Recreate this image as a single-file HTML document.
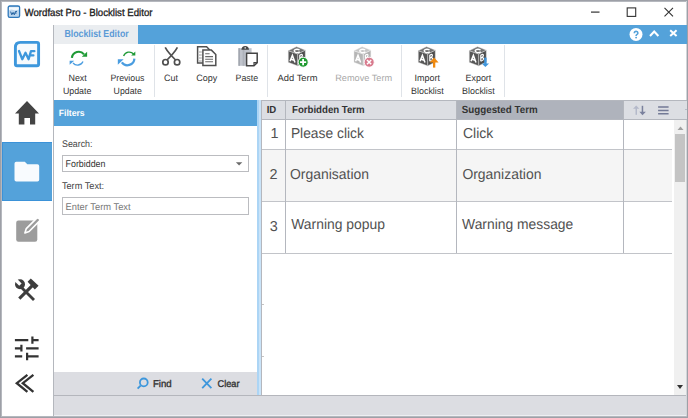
<!DOCTYPE html>
<html><head><meta charset="utf-8">
<style>
*{margin:0;padding:0;box-sizing:border-box}
html,body{width:688px;height:418px;overflow:hidden;background:#fff;font-family:"Liberation Sans",sans-serif}
svg{position:absolute;left:0;top:0}
text{font-family:"Liberation Sans",sans-serif;text-rendering:geometricPrecision}
</style></head><body>
<svg width="688" height="418" viewBox="0 0 688 418">
<!-- window frame -->
<rect x="0" y="0" width="688" height="418" fill="#fff"/>
<g shape-rendering="crispEdges">
<rect x="0" y="0" width="688" height="2" fill="#b5b8be"/>
<rect x="0" y="0" width="2" height="418" fill="#b5b8be"/>
<rect x="686" y="0" width="1" height="418" fill="#d3d5d9"/>
<rect x="0" y="416" width="688" height="2" fill="#b5b8be"/>
<rect x="0" y="0" width="688" height="1" fill="#9da0a7"/>
<rect x="0" y="0" width="1" height="418" fill="#9da0a7"/>
<rect x="687" y="0" width="1" height="418" fill="#9da0a7"/>
<rect x="0" y="417" width="688" height="1" fill="#9da0a7"/>
<!-- sidebar divider -->
<rect x="53" y="25" width="1" height="392" fill="#b4b7bd"/>
<!-- selected sidebar item -->
<rect x="2" y="142" width="50" height="59" fill="#54a2da"/>
<rect x="2" y="142" width="50" height="1" fill="#3b92d8"/>
<rect x="2" y="142" width="1" height="59" fill="#3b92d8"/>
<rect x="2" y="200" width="50" height="1" fill="#3b92d8"/>
<!-- tab bar -->
<rect x="54" y="25" width="633" height="19" fill="#54a2da"/>
<rect x="54" y="25" width="84" height="19" fill="#eaedf0"/>
<!-- ribbon separators -->
<rect x="154" y="45" width="1" height="52" fill="#dfe3e8"/>
<rect x="267" y="45" width="1" height="52" fill="#dfe3e8"/>
<rect x="401" y="45" width="1" height="52" fill="#dfe3e8"/>
<rect x="504" y="45" width="1" height="52" fill="#dfe3e8"/>

<!-- filters panel -->
<rect x="54" y="100" width="203" height="26" fill="#54a2da"/>
<rect x="62" y="155" width="186" height="16" fill="#fff" stroke="#bbbcc0" stroke-width="1.1" transform="translate(0.5 0.5)"/>
<rect x="62" y="197" width="186" height="17" fill="#fff" stroke="#bbbcc0" stroke-width="1.1" transform="translate(0.5 0.5)"/>
<rect x="54" y="372" width="203" height="23" fill="#dcdde2"/>
<!-- splitter -->
<rect x="257" y="100" width="2" height="295" fill="#acd5f5"/>
<rect x="259" y="100" width="2" height="295" fill="#c9e3f8"/>
<!-- status bar -->
<rect x="54" y="395" width="632" height="1" fill="#b4b6bc"/>
<rect x="54" y="396" width="632" height="20" fill="#dcdde2"/>
<rect x="54" y="415" width="632" height="1" fill="#eeeff2"/>
<!-- grid -->
<rect x="261" y="100" width="426" height="20" fill="#dcdee3"/>
<rect x="457" y="101" width="166" height="18" fill="#afb3bc"/>
<rect x="261" y="100" width="426" height="1" fill="#b4b7be"/>
<rect x="261" y="119" width="426" height="1" fill="#b4b7be"/>
<rect x="262" y="150" width="410" height="51" fill="#f5f5f5"/>
<rect x="261" y="149" width="411" height="1" fill="#c2c4c9"/>
<rect x="261" y="201" width="411" height="1" fill="#c2c4c9"/>
<rect x="261" y="253" width="411" height="1" fill="#c2c4c9"/>
<rect x="261" y="100" width="1" height="295" fill="#b4b7be"/>
<rect x="285" y="100" width="1" height="153" fill="#b4b7be"/>
<rect x="456" y="100" width="1" height="153" fill="#b4b7be"/>
<rect x="623" y="100" width="1" height="153" fill="#b4b7be"/>

<rect x="262" y="304" width="2" height="1" fill="#c4c4c4"/>
<rect x="262" y="356" width="2" height="1" fill="#c4c4c4"/>
<rect x="685" y="109" width="2" height="1" fill="#b8bcc8"/>
<!-- scrollbar -->
<rect x="674" y="120" width="12" height="275" fill="#f0f0f0"/>
<rect x="675" y="134" width="10" height="48" fill="#c4c4c4"/>
</g>
<!-- scroll arrows -->
<path d="M677.5,130 L680.5,126.5 L683.5,130 Z" fill="#a0a0a0"/>
<path d="M677,385 L683,385 L680,389 Z" fill="#333"/>
<!-- dropdown arrow -->
<path d="M235.9,162.2 L242.3,162.2 L239.1,165.6 Z" fill="#6a6a6a"/>


<!-- ================= ICONS ================= -->
<!-- title app icon -->
<rect x="8.2" y="6" width="11.4" height="11.4" rx="1.6" fill="#bcd6ee" stroke="#2e78ba" stroke-width="1.3"/>
<path d="M9,7.2 L18.8,7.2 L18.8,9.6 Q16,11 13.5,10 Q11,9 9,10.4 Z" fill="#f4f9fd"/>
<path d="M10.6,11.6 L11.8,14.8 L13.1,12.4 L14.3,14.8 L15.5,11.4 L17,11.4 M15,13 L16.6,13" fill="none" stroke="#1f5f9e" stroke-width="1"/>
<!-- window controls -->
<rect x="591" y="11.5" width="8.5" height="1.2" fill="#333"/>
<rect x="627.2" y="7.9" width="8.5" height="8.5" fill="none" stroke="#333" stroke-width="1.1"/>
<path d="M664.5,7.8 L673,16.3 M673,7.8 L664.5,16.3" stroke="#333" stroke-width="1.1"/>
<!-- tab bar right icons -->
<circle cx="636" cy="34.4" r="6.5" fill="#fff"/>
<path d="M634.3,33.2 Q634.4,31.3 636.1,31.3 Q637.9,31.4 637.9,33 Q637.9,34 636.8,34.6 Q636.1,35 636.1,35.9" fill="none" stroke="#54a2da" stroke-width="1.6"/>
<circle cx="636.1" cy="37.6" r="0.95" fill="#54a2da"/>
<path d="M650,36 L654.2,31.5 L658.4,36" fill="none" stroke="#fff" stroke-width="2"/>
<path d="M670.2,30.2 L676.6,36 M676.6,30.2 L670.2,36" stroke="#fff" stroke-width="2"/>

<!-- sidebar WF logo -->
<path d="M15.4,47.4 Q15.4,42.4 20.4,42.4 L37,42.4 Q38.6,42.4 38.6,44 L38.6,64.2 Q38.6,65.8 37,65.8 L17,65.8 Q15.4,65.8 15.4,64.2 Z" fill="#f6fafd" stroke="#3d97dc" stroke-width="2.9"/>
<path d="M19,51 L22.3,59.2 L25.5,52.8 L28.6,59.2 L31,51.2 L34.4,51.2 M29.8,55.4 L33.4,55.4" fill="none" stroke="#3d97dc" stroke-width="2.3" stroke-linejoin="round" stroke-linecap="round"/>
<!-- home -->
<path d="M27,101 L39,113.4 L35.2,113.4 L35.2,124.6 L30,124.6 L30,118.1 L24.4,118.1 L24.4,124.6 L18.8,124.6 L18.8,113.4 L15,113.4 Z" fill="#444"/>
<!-- folder -->
<path d="M16.3,161.8 L24.8,161.8 L27.3,164.3 L37.4,164.3 Q39.2,164.3 39.2,166.1 L39.2,179.8 Q39.2,181.6 37.4,181.6 L16.3,181.6 Q14.5,181.6 14.5,179.8 L14.5,163.6 Q14.5,161.8 16.3,161.8 Z" fill="#f8fbfe"/>
<!-- edit -->
<rect x="16.2" y="220.6" width="21.1" height="21.1" rx="2.2" fill="#9c9c9c"/>
<path d="M24.9,233 L26.3,228.6 L36.3,218.6 Q37.7,217.2 39.1,218.6 Q40.5,220 39.1,221.4 L29.1,231.5 Z" fill="#9c9c9c" stroke="#fff" stroke-width="1.6" stroke-linejoin="round"/>
<!-- tools -->
<g fill="#3d3d3d">
<path d="M18.2,297.6 L31.2,284.6 L33.4,286.8 L20.4,299.8 Z"/>
<path d="M30.8,278.4 L38.6,285.8 L34.8,289.4 L27.6,281.8 Z"/>
<path d="M22,286 L35,299 L33,301 L20,288 Z"/>
<circle cx="20" cy="284.2" r="5"/>
<path d="M21.6,283.4 L19.2,285.8 L13.6,280.2 L16,277.8 Z" fill="#fff"/>
</g>
<!-- sliders -->
<g stroke="#333" stroke-width="2.2" fill="none">
<path d="M14.9,340.2 L28.3,340.2 M32.4,340.2 L38.6,340.2 M32.4,336.5 L32.4,343.8"/>
<path d="M14.9,348.3 L21.4,348.3 M26.1,348.3 L38.6,348.3 M21.4,344.8 L21.4,351.6"/>
<path d="M14.9,356.3 L22.2,356.3 M27.1,356.3 L38.6,356.3 M27.1,352.8 L27.1,360.2"/>
</g>
<!-- chevrons -->
<path d="M27.4,374.8 L16.8,383.2 L27.4,391.8 M33.4,374.8 L22.8,383.2 L33.4,391.8" fill="none" stroke="#333" stroke-width="2.3"/>

<!-- ribbon: next update -->
<path d="M71.9,57.8 A6.8,6.8 0 0 1 84,54.4" fill="none" stroke="#1f9a36" stroke-width="2.2"/>
<path d="M87.1,51.8 L87.1,56.8 L81.8,56.8 Z" fill="#1f9a36"/>
<path d="M83,61.5 A6,6 0 0 1 73,63" fill="none" stroke="#4a9de0" stroke-width="1.3"/>
<path d="M69.6,60.8 L74.2,60.8 L69.6,64.8 Z" fill="#4a9de0"/>
<!-- ribbon: previous update -->
<path d="M123.6,56 A6,6 0 0 1 133.6,54" fill="none" stroke="#1f9a36" stroke-width="1.3"/>
<path d="M135.3,51.6 L135.3,55.6 L131.2,55.6 Z" fill="#1f9a36"/>
<path d="M134.4,58.6 A7,7 0 0 1 121.8,62.4" fill="none" stroke="#4a9de0" stroke-width="2.2"/>
<path d="M117.8,59.3 L123.6,59.3 L117.8,64.8 Z" fill="#4a9de0"/>
<!-- scissors -->
<g stroke="#505050" stroke-width="1.7" fill="none">
<path d="M165.2,47.4 Q168,52.5 175.6,60 M177.4,47.4 Q174.6,52.5 167,60"/>
<circle cx="165.5" cy="62.2" r="2.7"/>
<circle cx="177.1" cy="62.2" r="2.7"/>
</g>
<!-- copy -->
<g stroke="#505050" stroke-width="1.5" fill="#fff">
<path d="M197.6,46.8 L206.6,46.8 L209.8,50 L209.8,63 L197.6,63 Z"/>
<path d="M202.9,50.1 L211.4,50.1 L215.8,54.5 L215.8,65.4 L202.9,65.4 Z"/>
</g>
<g stroke="#6a6a6a" stroke-width="1.1">
<path d="M205.2,53.8 L209.6,53.8 M205.2,56.6 L213,56.6 M205.2,59.2 L213,59.2 M205.2,61.8 L213,61.8"/>
<path d="M199,52 L201.8,52 M199,55 L201.8,55 M199,58 L201.8,58 M199,61 L201.8,61" stroke="#a0a0a0"/>
</g>
<!-- paste -->
<rect x="238.4" y="48.2" width="13.2" height="17.6" fill="#bfc3cb"/>
<rect x="238.4" y="48.2" width="1.6" height="17.6" fill="#a3a7b0"/>
<rect x="242.6" y="48.2" width="1.8" height="17.6" fill="#aeb2ba"/>
<path d="M241.4,49.8 Q241.6,46.2 245.2,46 Q248.8,46.2 249,49.8 Z" fill="#484848"/>
<circle cx="245.2" cy="47.9" r="0.8" fill="#ddd"/>
<path d="M246.6,53.2 L257.2,53.2 L257.2,62.6 L254,65.8 L246.6,65.8 Z" fill="#fff" stroke="#444" stroke-width="1.5"/>
<path d="M254,65.8 L254,62.6 L257.2,62.6" fill="none" stroke="#444" stroke-width="1.2"/>
<g transform="translate(288.4,46.8)">
<path d="M8.1,0 L16.8,3.4 L9.3,7.2 L0,4 Z" fill="#727272"/>
<path d="M0,4 L9.3,7.2 L9.3,19 L0,15.5 Z" fill="#575757"/>
<path d="M9.3,7.2 L16.8,3.4 L16.8,15.2 L9.3,19 Z" fill="#4e4e4e"/>
<path d="M0,4 L9.3,7.2 L16.8,3.4 M9.3,7.2 L9.3,19" fill="none" stroke="#bdbdbd" stroke-width="0.9"/>
<path d="M0,4 L8.1,0 L16.8,3.4 L16.8,15.2 L9.3,19 L0,15.5 Z" fill="none" stroke="#bdbdbd" stroke-width="0.6" opacity="0.7"/>
<path d="M11.2,3.2 Q8.5,1.6 6.2,3.2 Q5,4.5 7.4,5.6 Q9.6,6.2 11.4,5" fill="none" stroke="#fff" stroke-width="1.4"/>
<path d="M1.6,14.4 L4,8.6 L6.6,15.6 M2.7,12.4 L5.7,13.4" fill="none" stroke="#fff" stroke-width="1.5"/>
<path d="M11.4,14.4 L11.4,8.4 Q14,6.8 14,8.6 Q14,10.2 11.6,11.2 Q14.4,10.4 14.2,12.2 Q14,13.6 11.4,14.4" fill="none" stroke="#fff" stroke-width="1.2"/>
</g>
<circle cx="303.2" cy="62.2" r="5" fill="#1e9a2f" stroke="#fff" stroke-width="0.9"/>
<path d="M303.1,59 L303.1,65.2 M300,62.1 L306.2,62.1" stroke="#fff" stroke-width="1.8"/>
<g transform="translate(354,46.8)">
<path d="M8.1,0 L16.8,3.4 L9.3,7.2 L0,4 Z" fill="#c6c6c6"/>
<path d="M0,4 L9.3,7.2 L9.3,19 L0,15.5 Z" fill="#b6b6b6"/>
<path d="M9.3,7.2 L16.8,3.4 L16.8,15.2 L9.3,19 Z" fill="#b0b0b0"/>
<path d="M0,4 L9.3,7.2 L16.8,3.4 M9.3,7.2 L9.3,19" fill="none" stroke="#e8e8e8" stroke-width="0.9"/>
<path d="M0,4 L8.1,0 L16.8,3.4 L16.8,15.2 L9.3,19 L0,15.5 Z" fill="none" stroke="#e8e8e8" stroke-width="0.6" opacity="0.7"/>
<path d="M11.2,3.2 Q8.5,1.6 6.2,3.2 Q5,4.5 7.4,5.6 Q9.6,6.2 11.4,5" fill="none" stroke="#fff" stroke-width="1.4"/>
<path d="M1.6,14.4 L4,8.6 L6.6,15.6 M2.7,12.4 L5.7,13.4" fill="none" stroke="#fff" stroke-width="1.5"/>
<path d="M11.4,14.4 L11.4,8.4 Q14,6.8 14,8.6 Q14,10.2 11.6,11.2 Q14.4,10.4 14.2,12.2 Q14,13.6 11.4,14.4" fill="none" stroke="#fff" stroke-width="1.2"/>
</g>
<circle cx="369.2" cy="62.2" r="5" fill="#d87a8d" stroke="#fff" stroke-width="0.9"/>
<path d="M367,60 L371.2,64.2 M371.2,60 L367,64.2" stroke="#fff" stroke-width="1.5"/>
<g transform="translate(418.4,46.8)">
<path d="M8.1,0 L16.8,3.4 L9.3,7.2 L0,4 Z" fill="#727272"/>
<path d="M0,4 L9.3,7.2 L9.3,19 L0,15.5 Z" fill="#575757"/>
<path d="M9.3,7.2 L16.8,3.4 L16.8,15.2 L9.3,19 Z" fill="#4e4e4e"/>
<path d="M0,4 L9.3,7.2 L16.8,3.4 M9.3,7.2 L9.3,19" fill="none" stroke="#bdbdbd" stroke-width="0.9"/>
<path d="M0,4 L8.1,0 L16.8,3.4 L16.8,15.2 L9.3,19 L0,15.5 Z" fill="none" stroke="#bdbdbd" stroke-width="0.6" opacity="0.7"/>
<path d="M11.2,3.2 Q8.5,1.6 6.2,3.2 Q5,4.5 7.4,5.6 Q9.6,6.2 11.4,5" fill="none" stroke="#fff" stroke-width="1.4"/>
<path d="M1.6,14.4 L4,8.6 L6.6,15.6 M2.7,12.4 L5.7,13.4" fill="none" stroke="#fff" stroke-width="1.5"/>
<path d="M11.4,14.4 L11.4,8.4 Q14,6.8 14,8.6 Q14,10.2 11.6,11.2 Q14.4,10.4 14.2,12.2 Q14,13.6 11.4,14.4" fill="none" stroke="#fff" stroke-width="1.2"/>
</g>
<path d="M429.6,62.6 L434.1,57.6 L438.6,62.6 Z" fill="#f08a10"/>
<rect x="433" y="62" width="2.3" height="5.6" fill="#f08a10"/>
<g transform="translate(469.4,46.8)">
<path d="M8.1,0 L16.8,3.4 L9.3,7.2 L0,4 Z" fill="#727272"/>
<path d="M0,4 L9.3,7.2 L9.3,19 L0,15.5 Z" fill="#575757"/>
<path d="M9.3,7.2 L16.8,3.4 L16.8,15.2 L9.3,19 Z" fill="#4e4e4e"/>
<path d="M0,4 L9.3,7.2 L16.8,3.4 M9.3,7.2 L9.3,19" fill="none" stroke="#bdbdbd" stroke-width="0.9"/>
<path d="M0,4 L8.1,0 L16.8,3.4 L16.8,15.2 L9.3,19 L0,15.5 Z" fill="none" stroke="#bdbdbd" stroke-width="0.6" opacity="0.7"/>
<path d="M11.2,3.2 Q8.5,1.6 6.2,3.2 Q5,4.5 7.4,5.6 Q9.6,6.2 11.4,5" fill="none" stroke="#fff" stroke-width="1.4"/>
<path d="M1.6,14.4 L4,8.6 L6.6,15.6 M2.7,12.4 L5.7,13.4" fill="none" stroke="#fff" stroke-width="1.5"/>
<path d="M11.4,14.4 L11.4,8.4 Q14,6.8 14,8.6 Q14,10.2 11.6,11.2 Q14.4,10.4 14.2,12.2 Q14,13.6 11.4,14.4" fill="none" stroke="#fff" stroke-width="1.2"/>
</g>
<rect x="484.2" y="57.6" width="2.4" height="6.4" fill="#3f96dc"/>
<path d="M481.7,63.4 L485.4,67 L489.1,63.4 Z" fill="#3f96dc"/>
<!-- find / clear -->
<circle cx="143.8" cy="382.4" r="3.9" fill="none" stroke="#3d97dc" stroke-width="1.8"/>
<path d="M140.6,385.6 L137.6,388.6" stroke="#3d97dc" stroke-width="1.8"/>
<path d="M202.2,378.6 L211.4,388.2 M211.4,378.6 L202.2,388.2" stroke="#3d97dc" stroke-width="1.8"/>
<!-- grid header icons -->
<path d="M633,108.8 L636.2,105.4 L639.4,108.8 Z" fill="#b4b9ca"/>
<rect x="635.5" y="108" width="1.5" height="6.8" fill="#b4b9ca"/>
<rect x="641.7" y="105.8" width="1.5" height="6.6" fill="#7a819d"/>
<path d="M639.4,111.8 L642.45,115.2 L645.9,111.8 Z" fill="#7a819d"/>
<g stroke="#737a96" stroke-width="1.5" fill="none">
<path d="M658.1,107 L668.6,107 M658.1,110.4 L668.6,110.4 M658.1,113.7 L668.6,113.7"/>
</g>

<!-- ================= TEXT ================= -->
<text x="24.5" y="15.7" font-size="10.4" fill="#1a1a1a" stroke="#1a1a1a" stroke-width="0.3" textLength="128" lengthAdjust="spacingAndGlyphs">Wordfast Pro - Blocklist Editor</text>
<text x="64.4" y="36.8" font-size="10.2" font-weight="bold" fill="#5b9ad6" textLength="64.3" lengthAdjust="spacingAndGlyphs">Blocklist Editor</text>

<g font-size="9.2" fill="#333">
<text x="68.5" y="81.1" textLength="18.3" lengthAdjust="spacingAndGlyphs">Next</text>
<text x="62.9" y="93.5" textLength="28.5" lengthAdjust="spacingAndGlyphs">Update</text>
<text x="110.4" y="81.1" textLength="34" lengthAdjust="spacingAndGlyphs">Previous</text>
<text x="113.6" y="93.5" textLength="28.2" lengthAdjust="spacingAndGlyphs">Update</text>
<text x="164" y="81.1" textLength="13.9" lengthAdjust="spacingAndGlyphs">Cut</text>
<text x="196.2" y="81.1" textLength="21" lengthAdjust="spacingAndGlyphs">Copy</text>
<text x="235.5" y="81.1" textLength="22.6" lengthAdjust="spacingAndGlyphs">Paste</text>
<text x="277.6" y="81.1" textLength="39.9" lengthAdjust="spacingAndGlyphs">Add Term</text>
<text x="335.2" y="81.1" textLength="57" lengthAdjust="spacingAndGlyphs" fill="#a8a8a8">Remove Term</text>
<text x="414.5" y="81.1" textLength="25.5" lengthAdjust="spacingAndGlyphs">Import</text>
<text x="411" y="93.5" textLength="32.8" lengthAdjust="spacingAndGlyphs">Blocklist</text>
<text x="465.6" y="81.1" textLength="25.7" lengthAdjust="spacingAndGlyphs">Export</text>
<text x="462" y="93.5" textLength="32.8" lengthAdjust="spacingAndGlyphs">Blocklist</text>
</g>

<text x="58.7" y="116" font-size="9" font-weight="bold" fill="#fff" textLength="26" lengthAdjust="spacingAndGlyphs">Filters</text>
<g font-size="9.7" fill="#444">
<text x="62" y="146.8" textLength="30.5" lengthAdjust="spacingAndGlyphs">Search:</text>
<text x="65.6" y="167.1" textLength="39.8" lengthAdjust="spacingAndGlyphs" fill="#333">Forbidden</text>
<text x="61.9" y="189.4" textLength="42.2" lengthAdjust="spacingAndGlyphs">Term Text:</text>
<text x="65.6" y="209.8" textLength="65" lengthAdjust="spacingAndGlyphs" fill="#777">Enter Term Text</text>
</g>
<g font-size="9.8" fill="#333" stroke="#333" stroke-width="0.35">
<text x="153" y="386.9" textLength="18.7" lengthAdjust="spacingAndGlyphs">Find</text>
<text x="217.5" y="386.9" textLength="22" lengthAdjust="spacingAndGlyphs">Clear</text>
</g>

<g font-size="10.3" font-weight="bold" fill="#333">
<text x="266.7" y="112.8" textLength="9.6" lengthAdjust="spacingAndGlyphs">ID</text>
<text x="292" y="112.8" textLength="72.7" lengthAdjust="spacingAndGlyphs">Forbidden Term</text>
<text x="461.8" y="112.8" textLength="75.9" lengthAdjust="spacingAndGlyphs">Suggested Term</text>
</g>
<g font-size="14.4" fill="#515151">
<text x="270.4" y="137.9">1</text>
<text x="290.9" y="137.9" textLength="73" lengthAdjust="spacingAndGlyphs">Please click</text>
<text x="463" y="137.9" textLength="30.2" lengthAdjust="spacingAndGlyphs">Click</text>
<text x="269.6" y="179.3">2</text>
<text x="290" y="178.5" textLength="79" lengthAdjust="spacingAndGlyphs">Organisation</text>
<text x="462.4" y="178.5" textLength="79" lengthAdjust="spacingAndGlyphs">Organization</text>
<text x="269.8" y="230.8">3</text>
<text x="291.2" y="229.1" textLength="93.8" lengthAdjust="spacingAndGlyphs">Warning popup</text>
<text x="462.1" y="229.1" textLength="111.2" lengthAdjust="spacingAndGlyphs">Warning message</text>
</g>
</svg>
</body></html>
